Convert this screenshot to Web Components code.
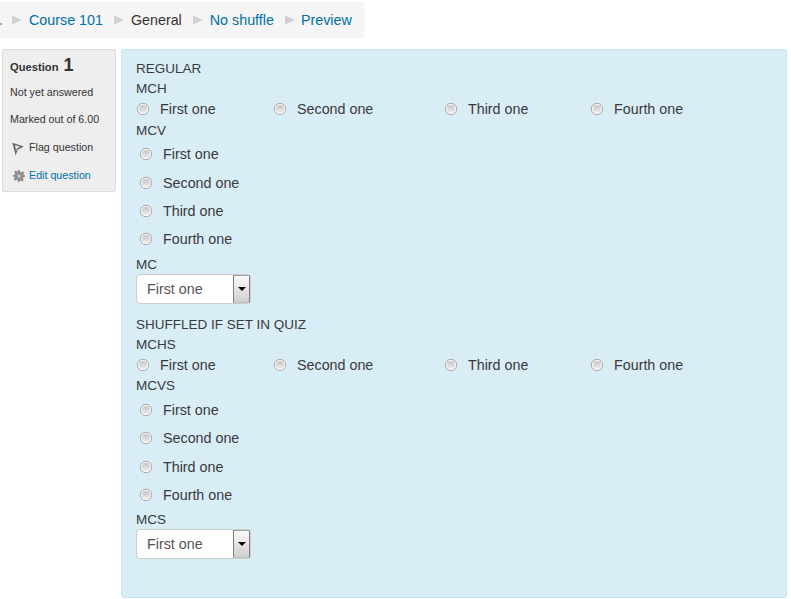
<!DOCTYPE html>
<html><head><meta charset="utf-8"><style>
html,body{margin:0;padding:0;height:599px;overflow:hidden;background:#fff;font-family:"Liberation Sans",Arial,sans-serif;color:#333}
.layout{display:flex;gap:5px;padding:11px 4px 0 2px;align-items:flex-start}
</style></head><body>
<crumb-bar></crumb-bar>
<div class="layout">
<info-box></info-box>
<question-panel>
  <plain-line style="margin-top:8px">REGULAR</plain-line>
  <plain-line>MCH</plain-line>
  <radio-row></radio-row>
  <plain-line>MCV</plain-line>
  <radio-col></radio-col>
  <plain-line>MC</plain-line>
  <fake-select></fake-select>
  <plain-line style="margin-top:10px">SHUFFLED IF SET IN QUIZ</plain-line>
  <plain-line>MCHS</plain-line>
  <radio-row></radio-row>
  <plain-line style="margin-top:-1px">MCVS</plain-line>
  <radio-col style="margin:.6px 0 -.6px"></radio-col>
  <plain-line>MCS</plain-line>
  <fake-select></fake-select>
</question-panel>
</div>
<script>
const def=(n,html)=>customElements.define(n,class extends HTMLElement{constructor(){super();this.attachShadow({mode:'open'}).innerHTML=html}});
const radio=`<svg width="14" height="14" viewBox="0 0 14 14" style="flex:none"><defs><linearGradient id="g" x1="0" y1="0" x2="0" y2="1"><stop offset="0" stop-color="#f4f4f4"/><stop offset="1" stop-color="#fcfcfc"/></linearGradient><linearGradient id="h" x1="0" y1="0" x2="0" y2="1"><stop offset="0" stop-color="#c4c4c4"/><stop offset="1" stop-color="#ececec"/></linearGradient></defs><circle cx="7" cy="7" r="5.700" fill="url(#g)" stroke="#a8a8a8"/><circle cx="7" cy="7" r="4" fill="url(#h)"/></svg>`;
const tri=`<svg width="10" height="10" viewBox="0 0 10 10"><path d="M0 0.5L10 5L0 9.500Z" fill="#d0d0d0"/></svg>`;
def('crumb-bar',`<style>:host{display:block;width:365px;height:36px;margin-top:2px;background:#f5f5f5;border-radius:0 4px 4px 0;box-sizing:border-box;font-size:14.300px;line-height:36px;overflow:hidden}
.w{display:flex;align-items:center;height:36px;white-space:nowrap;color:#333}
a{color:#0070a8;text-decoration:none}svg{flex:none;margin:0 7px 0 11px}
.dot{width:2px;height:2px;background:#7fb7d3;margin-top:8px}</style>
<div class="w"><span class="dot"></span>${tri.replace('<svg','<svg style="margin-left:10px"')}<a>Course 101</a>${tri}<span>General</span>${tri}<a>No shuffle</a>${tri.replace('<svg','<svg style="margin-right:6px"')}<a>Preview</a></div>`);
def('info-box',`<style>:host{display:block;width:114px;height:143px;box-sizing:border-box;background:#eee;border:1px solid #dcdcdc;border-radius:2px;padding:0 0 0 7px;font-size:10.700px;color:#333;flex:none}
.q{font-weight:bold;font-size:11.200px;height:25px;margin-top:4px;display:flex;align-items:baseline;line-height:22px}
.q b{font-size:18px;margin-left:5px}
.r{height:27px;line-height:27px}.r.i{display:flex;align-items:center}
a{color:#0070a8}</style>
<div class="q">Question <b>1</b></div>
<div class="r">Not yet answered</div>
<div class="r">Marked out of 6.00</div>
<div class="r i" style="height:29px"><svg width="12" height="14" viewBox="0 0 12 14" style="margin:2px 5px 0 2px"><path d="M0.300 0.800L11.800 4.500L5.400 8L3.800 13.800ZM3 3L4.100 8.800L4.800 6.800L8 4.800Z" fill="#666" fill-rule="evenodd"/></svg>Flag question</div>
<div class="r i" style="height:26px"><svg width="12" height="12" viewBox="0 0 12 12" style="margin:1px 4px 0 3px"><path d="M5 0h2l.3 1.700 1.200.5L10 1.200l1.400 1.400-1 1.500.5 1.200L12 5v2l-1.700.3-.5 1.200 1 1.500L9.400 11.400 8 10.400l-1.200.5L6.500 12H5l-.3-1.700-1.200-.5-1.500 1L.6 9.400l1-1.500-.5-1.200L0 6.500V5l1.700-.3.5-1.200-1-1.500L2.600.6 4 1.600l1-.5Z" fill="#8f8f8f"/><circle cx="6" cy="6" r="1.500" fill="#d8d8d8"/></svg><a>Edit question</a></div>`);
def('question-panel',`<style>:host{display:block;flex:1;height:549px;box-sizing:border-box;background:#d9edf7;border:1px solid #c9e3ef;border-radius:3px;padding:0 14px;font-size:14px;color:#333}</style><slot></slot>`);
def('plain-line',`<style>:host{display:block;height:20px;line-height:22px;font-size:13.500px;color:#3a3a3a}</style><slot></slot>`);
const labels=['First one','Second one','Third one','Fourth one'];
def('radio-row',`<style>:host{display:grid;grid-template-columns:137px 171px 146px auto;height:22px;font-size:14.300px;line-height:21px;color:#3a3a3a}
div{display:flex;align-items:center;gap:10px}</style>${labels.map(l=>`<div>${radio}<span>${l}</span></div>`).join('')}`);
def('radio-col',`<style>:host{display:flex;flex-direction:column;height:114px;font-size:14.300px;color:#3a3a3a}
div{display:flex;align-items:center;gap:10px;height:28.400px;padding-left:3px}</style>${labels.map(l=>`<div>${radio}<span>${l}</span></div>`).join('')}`);
def('fake-select',`<style>:host{display:block;width:115px;height:30px;box-sizing:border-box;background:#fff;border:1px solid #ccc;border-radius:4px;position:relative;font-size:14.300px;line-height:28px;color:#555;padding-left:10px}
.b{position:absolute;right:0;top:0;width:17px;height:28px;box-sizing:border-box;border:1px solid #808080;border-top-color:#a0a0a0;border-bottom-color:#c0c0c0;background:linear-gradient(#fafafa,#cfcfcf);display:flex;align-items:center;justify-content:center}
.b i{width:0;height:0;border:4px solid transparent;border-top:4px solid #000;border-bottom:0}</style>First one<span class="b"><i></i></span>`);
</script>
</body></html>
